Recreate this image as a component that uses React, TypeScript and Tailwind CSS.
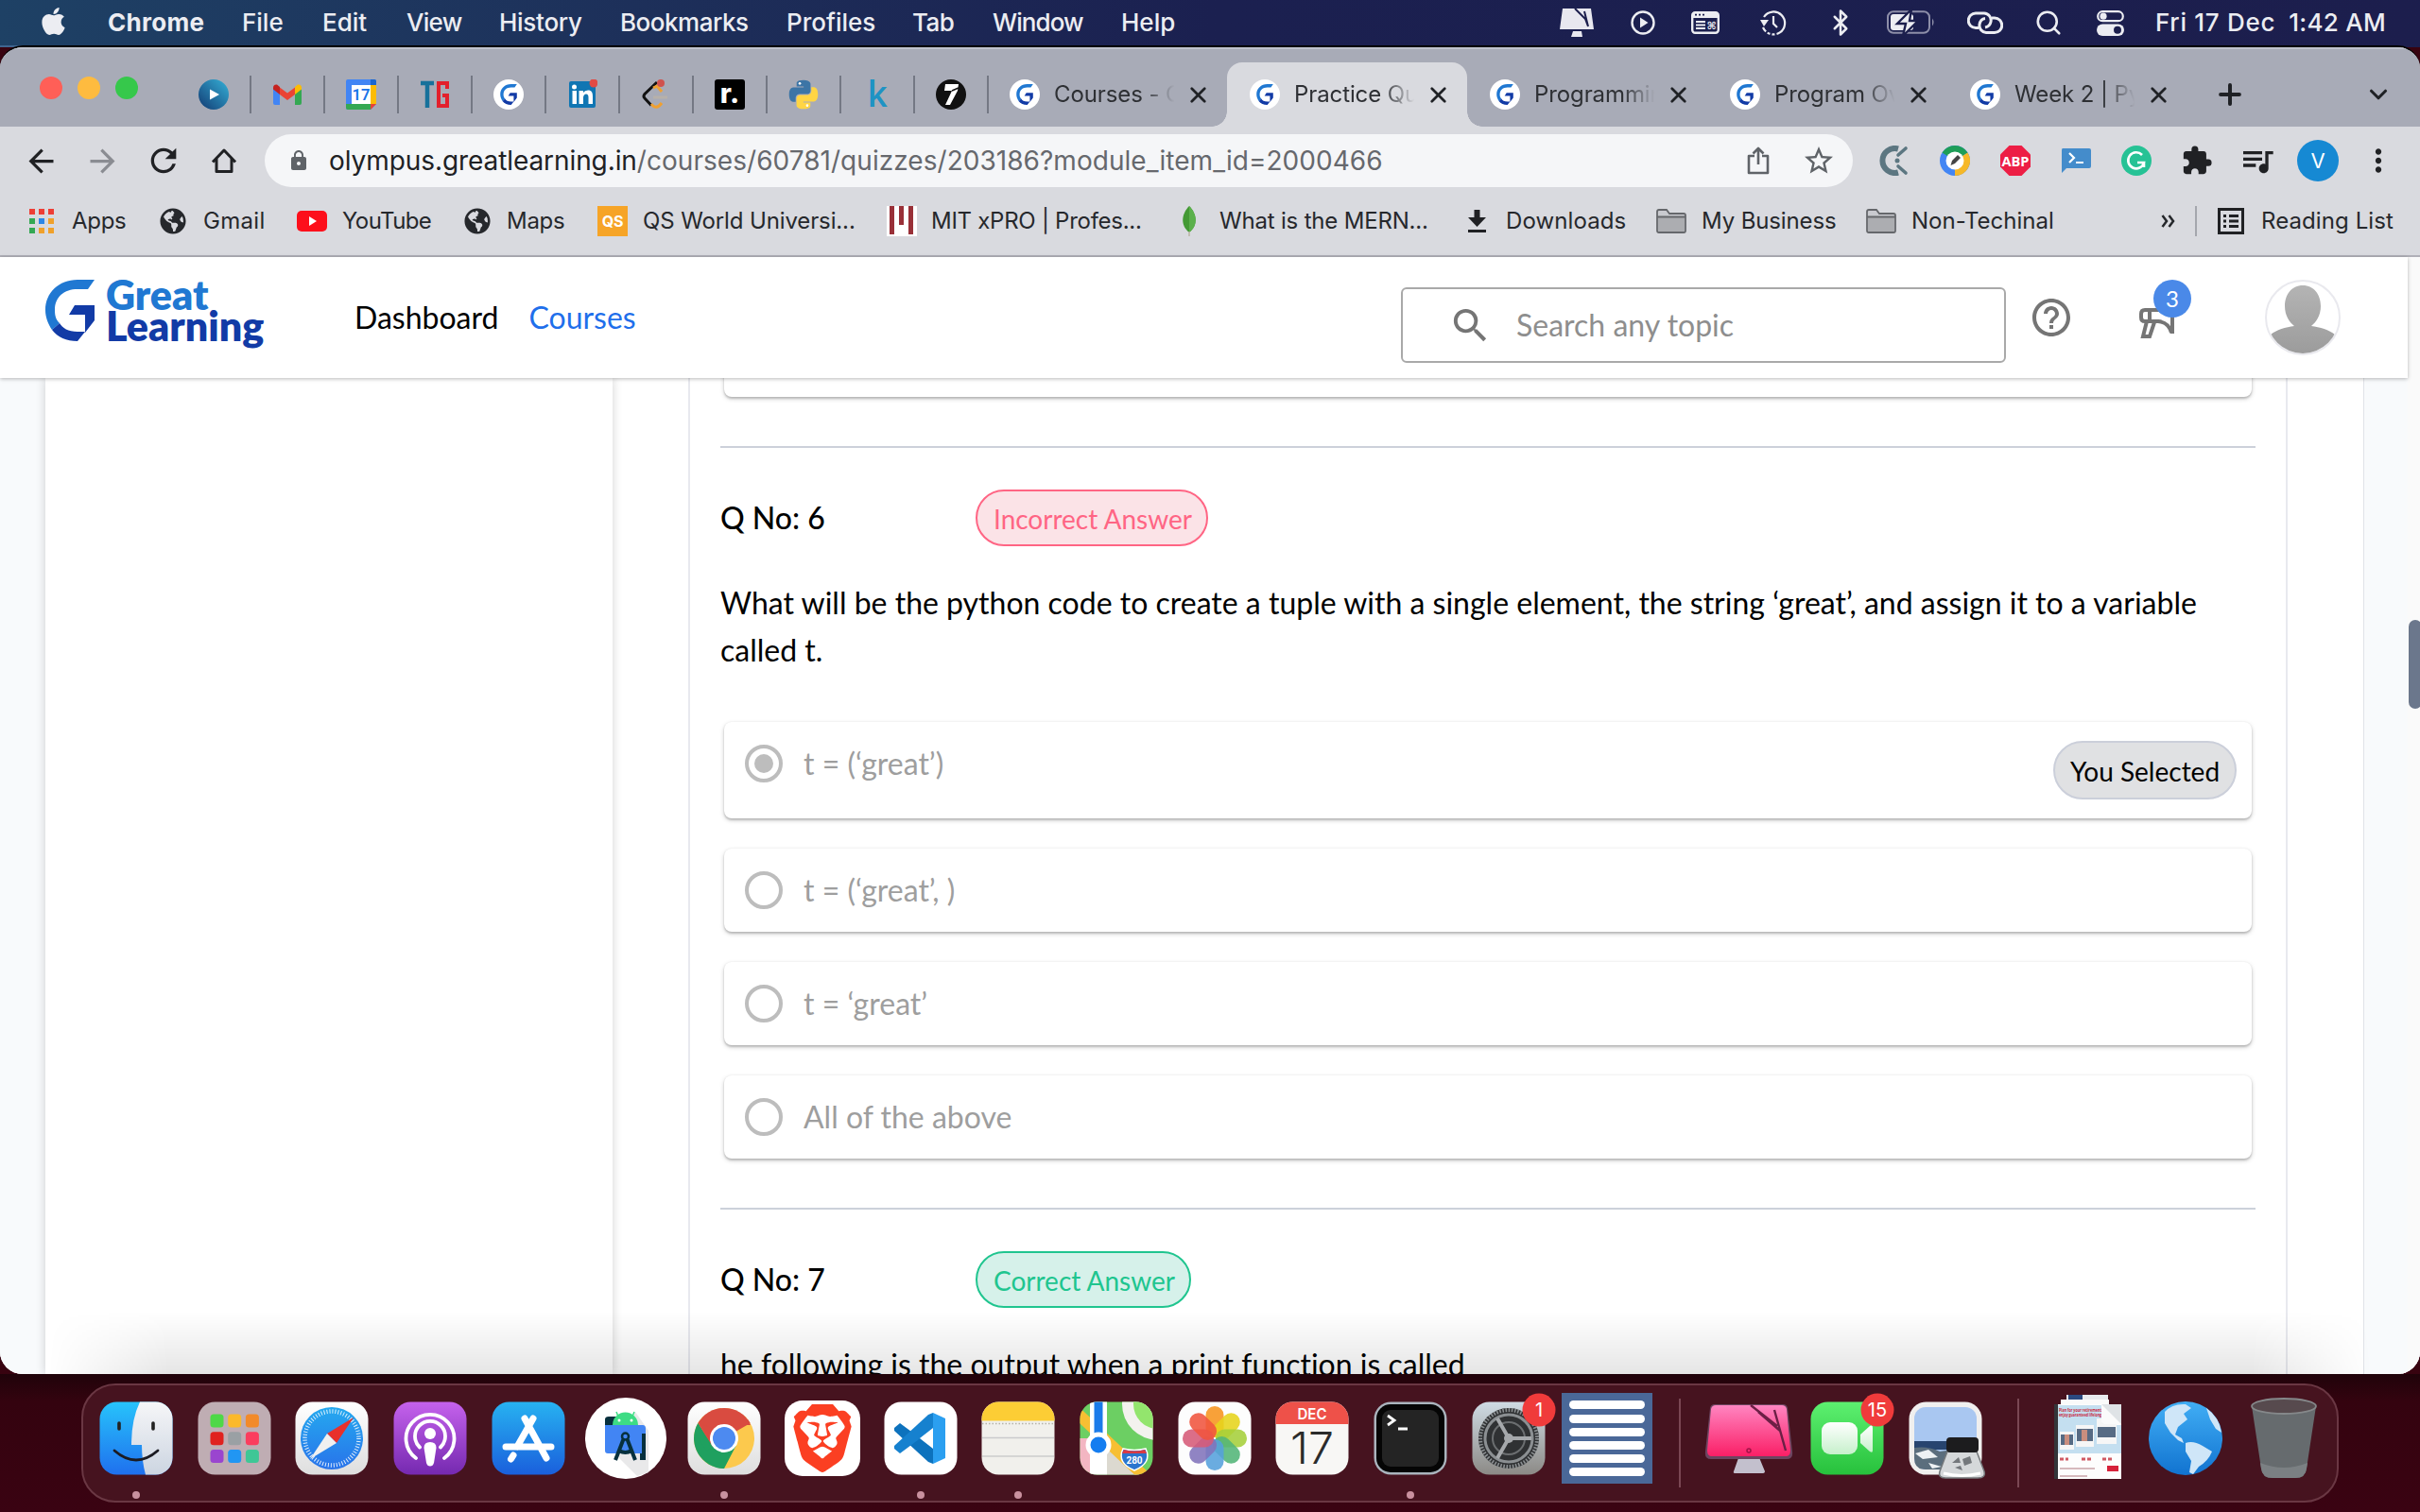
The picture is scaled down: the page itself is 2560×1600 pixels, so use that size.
import React from "react";
import { FaApple, FaGlobeAmericas } from "react-icons/fa";
import {
  MdSearch, MdHelpOutline, MdLock, MdExtension, MdQueueMusic, MdStarBorder,
  MdMoreVert, MdRefresh, MdArrowBack, MdArrowForward,
} from "react-icons/md";
import { SiBrave } from "react-icons/si";
import { Bluetooth, Search, X, Plus, ChevronDown } from "lucide-react";

type Kids = { children?: React.ReactNode };

/* ---------- menu bar ---------- */

const menuItems = [
  { t: "Chrome", c: "w-[142px] font-bold tracking-[0.3px]" },
  { t: "File", c: "w-[85px]" },
  { t: "Edit", c: "w-[89px]" },
  { t: "View", c: "w-[98px] tracking-[-0.7px]" },
  { t: "History", c: "w-[128px] tracking-[-0.28px]" },
  { t: "Bookmarks", c: "w-[176px] tracking-[-0.48px]" },
  { t: "Profiles", c: "w-[133px]" },
  { t: "Tab", c: "w-[85px] tracking-[-0.6px]" },
  { t: "Window", c: "w-[136px] tracking-[-0.9px]" },
  { t: "Help", c: "w-[60px]" },
];

function MenuBar() {
  return (
    <div className="flex h-[48px] shrink-0 items-center bg-gradient-to-r from-[#1e4165] via-[#1b2050] via-50% to-[#1c1e4d] text-[26px] font-medium leading-none text-[#ecedf2]">
      <FaApple className="ml-[40px] -mt-[4px] mr-[41px] size-[33px]" />
      {menuItems.map((m) => (
        <span key={m.t} className={"shrink-0 " + m.c}>{m.t}</span>
      ))}
      <div className="ml-[403px] flex h-full items-center">
        <svg className="h-[32px] w-[38px]" viewBox="0 0 38 32">
          <path d="M4 1H34L37 23H1Z M15 25H24L25 31H13Z" fill="#e8e8ef" />
          <path d="M17 1 28 12 31 20M27 4 31 20" stroke="#1c1f4d" strokeWidth="2" fill="none" />
        </svg>
        <svg className="ml-[38px] size-[26px]" viewBox="0 0 26 26">
          <circle cx="13" cy="13" r="11.5" fill="none" stroke="#ecedf2" strokeWidth="2.4" />
          <path d="M10 7.5 18.5 13 10 18.5Z" fill="#ecedf2" />
        </svg>
        <svg className="ml-[38px] h-[24px] w-[30px]" viewBox="0 0 30 24">
          <rect x="1.2" y="1.2" width="27.6" height="21.6" rx="3" fill="none" stroke="#ecedf2" strokeWidth="2.4" />
          <path d="M1 2H29V7H1Z" fill="#ecedf2" />
          <path d="M4 3.6H6M8 3.6H10M12 3.6H14" stroke="#1c1f4d" strokeWidth="1.8" />
          <path d="M5 11H15M5 14.5H15M5 18H15" stroke="#ecedf2" strokeWidth="1.8" />
          <text x="16.5" y="19" fontSize="11" fontWeight="700" fill="#ecedf2" fontFamily="DejaVu Sans">⌘</text>
        </svg>
        <svg className="ml-[42px] size-[30px]" viewBox="0 0 30 30">
          <path d="M5 9A12 12 0 1 1 4 20" fill="none" stroke="#ecedf2" strokeWidth="2.2" strokeDasharray="46 2 3 2 3 2" />
          <path d="M1 12 5 19 10 12Z" fill="#ecedf2" />
          <path d="M15 8V16L19 20" fill="none" stroke="#ecedf2" strokeWidth="2.2" />
        </svg>
        <Bluetooth className="ml-[41px] h-[32px] w-[30px]" strokeWidth={2} />
        <svg className="ml-[34px] h-[26px] w-[52px] overflow-visible" viewBox="0 0 52 26">
          <rect x="1" y="1.2" width="44" height="22.6" rx="6" fill="none" stroke="#8d8ea8" strokeWidth="2" />
          <path d="M48 8.500Q51 12.500 48 16.500Z" fill="#8d8ea8" />
          <rect x="4" y="4" width="24" height="17" rx="3" fill="#ecedf2" />
          <path d="M26 -1 11 14H20L17 27 33 11H24Z" fill="#ecedf2" stroke="#1c1f4d" strokeWidth="2.4" />
        </svg>
        <svg className="ml-[33px] h-[26px] w-[38px]" viewBox="0 0 38 26" fill="none" stroke="#ecedf2" strokeWidth="3">
          <path d="M12 18.500H9A7.500 7.500 0 0 1 9 3H18A7.500 7.500 0 0 1 25 12Q24 17 19 18" />
          <path d="M26 8H29A7.500 7.500 0 0 1 29 23.500H20A7.500 7.500 0 0 1 13 15Q14 9 19 8.500" />
        </svg>
        <Search className="ml-[33px] size-[30px]" strokeWidth={2.1} />
        <svg className="ml-[36px] h-[27px] w-[29px]" viewBox="0 0 29 27">
          <rect x="1.200" y="1.200" width="26.600" height="10" rx="5" fill="none" stroke="#ecedf2" strokeWidth="2.200" />
          <circle cx="7" cy="6.200" r="3.600" fill="#ecedf2" />
          <rect x="0" y="14.500" width="29" height="12.500" rx="6.200" fill="#ecedf2" />
          <circle cx="22" cy="20.700" r="4" fill="#1c1f4d" />
        </svg>
      </div>
      <span className="ml-[33px] shrink-0 whitespace-nowrap tracking-[0.7px]">Fri 17 Dec</span>
      <span className="ml-[14px] shrink-0 whitespace-nowrap tracking-[0.3px]">1:42 AM</span>
    </div>
  );
}

/* ---------- tab strip ---------- */

function GMark({ className }: { className: string }) {
  return (
    <svg className={className} viewBox="0 0 52 65">
      <path d="M52 0H34C14 0 0 14 0 32C0 40 3 47 7 53L15 46C11 42 10 38 10 32C10 18 20 10 34 10H45Z" fill="#2078d2" />
      <path d="M7 53C13 61 22 65 34 65L42 55H34C24 55 18 51 15 46Z M31 27H52V43L42 56V37H25Z" fill="#123ba6" />
    </svg>
  );
}

function GFav() {
  return (
    <span className="flex size-[32px] shrink-0 items-center justify-center rounded-full bg-white">
      <GMark className="h-[22px] w-[18px]" />
    </span>
  );
}

const pinned: React.ReactNode[] = [
  <svg className="size-[32px]" viewBox="0 0 32 32">
    <defs><linearGradient id="pl" x1="1" y1="0" x2="0" y2="1"><stop stopColor="#35b1d8" /><stop offset="1" stopColor="#123a72" /></linearGradient></defs>
    <circle cx="16" cy="16" r="16" fill="url(#pl)" /><path d="M12 10.500 22 16 12 21.500Z" fill="#fff" />
  </svg>,
  <svg className="h-[22px] w-[30px]" viewBox="0 0 30 22">
    <path d="M0 4V20Q0 22 2 22H7V10Z" fill="#4285f4" /><path d="M30 4V20Q30 22 28 22H23V10Z" fill="#34a853" />
    <path d="M7 3.500 15 9.500 23 3.500V11L15 17 7 11Z" fill="#ea4335" />
    <path d="M0 4Q0 0 4 .5L7 3V11L0 5.500Z" fill="#c5221f" /><path d="M30 4Q30 0 26 .5L23 3V11L30 5.500Z" fill="#fbbc04" />
  </svg>,
  <svg className="size-[32px]" viewBox="0 0 32 32">
    <path d="M2 0H30Q32 0 32 2V26L26 32H2Q0 32 0 30V2Q0 0 2 0Z" fill="#4285f4" />
    <path d="M26 6H32V26H26Z" fill="#fbbc04" /><path d="M0 26H26V32H2Q0 32 0 30Z" fill="#34a853" />
    <path d="M26 26H32L26 32Z" fill="#ea4335" /><path d="M26 0H30Q32 0 32 2V6H26Z" fill="#1967d2" />
    <path d="M6 6H26V26H6Z" fill="#fff" />
    <text x="16" y="22" fontSize="16.500" fontWeight="600" textAnchor="middle" fill="#1a73e8" fontFamily="Roboto">17</text>
  </svg>,
  <svg className="size-[32px]" viewBox="0 0 32 32" fill="none">
    <path d="M1 4H15M8 4V30" stroke="#17719b" strokeWidth="4.500" />
    <path d="M29 10V4H20V28H29V17H24" stroke="#e3202c" strokeWidth="4" />
  </svg>,
  <GFav />,
  <svg className="size-[32px]" viewBox="0 0 32 32">
    <rect x="2" y="2" width="28" height="28" rx="2" fill="#1076b3" />
    <circle cx="7.500" cy="8" r="2.500" fill="#fff" />
    <path d="M5.500 12H10V26H5.500Z M12.500 12H17V14Q18.500 11.500 22 11.500C26 11.500 27 14 27 18V26H22.500V19Q22.500 15.500 20 15.500T17 19V26H12.500Z" fill="#fff" />
    <circle cx="28" cy="4" r="4.500" fill="#e24b44" />
  </svg>,
  <svg className="size-[32px]" viewBox="0 0 32 32" fill="none" strokeWidth="3">
    <path d="M17 3 4 15.500Q2 18 4 20L11 27.500" stroke="#111" />
    <path d="M13 9 17 7 22 13M11 26Q16 33 22 25" stroke="#f0a030" /><path d="M13 19H28" stroke="#b7b1aa" />
    <circle cx="21" cy="4" r="4" fill="#d0524e" />
  </svg>,
  <span className="flex size-[32px] items-center justify-center rounded-[3px] bg-black pb-[3px] text-[29px] font-extrabold leading-none text-white">r.</span>,
  <svg className="size-[32px]" viewBox="1 1 22 22">
    <path d="M12 1.500c-5.400 0-5 2.300-5 2.300v2.400h5.100v.7H4.900S1.500 6.500 1.500 12s3 5.300 3 5.300h1.800v-2.600s-.1-3 2.900-3h5.100s2.800 0 2.800-2.700V4.500S17.500 1.500 12 1.500z" fill="#3c75a6" />
    <path transform="rotate(180 12 12)" d="M12 1.500c-5.400 0-5 2.300-5 2.300v2.400h5.100v.7H4.900S1.500 6.500 1.500 12s3 5.300 3 5.300h1.800v-2.600s-.1-3 2.900-3h5.100s2.800 0 2.800-2.700V4.500S17.500 1.500 12 1.500z" fill="#ffd544" />
    <circle cx="9.300" cy="4" r=".9" fill="#fff" /><circle cx="14.700" cy="20" r=".9" fill="#fff" />
  </svg>,
  <span className="pb-[3px] text-[37px] font-semibold leading-[32px] text-[#1e93c4] [font-family:'Open_Sans']">k</span>,
  <svg className="size-[32px]" viewBox="0 0 32 32">
    <circle cx="16" cy="16" r="16" fill="#111" /><path d="M10 5H24L23 12 15 27H10L17 12H9Z" fill="#fff" /><path d="M17 12 24 9" stroke="#111" strokeWidth="1.500" />
  </svg>,
];

const Sep = () => <span className="h-[40px] w-[2px] shrink-0 bg-[#747884]" />;

function Tab({ title, active, sep }: { title: string; active?: boolean; sep?: boolean }) {
  return (
    <div className={"relative flex h-[68px] w-[254px] shrink-0 items-center " + (active ? "rounded-t-[16px] bg-[#d9dadf]" : "")}>
      {active && (
        <>
          <span className="absolute bottom-0 -left-[16px] size-[16px] bg-[radial-gradient(circle_at_0_0,transparent_15.5px,#d9dadf_16px)]" />
          <span className="absolute bottom-0 -right-[16px] size-[16px] bg-[radial-gradient(circle_at_100%_0,transparent_15.5px,#d9dadf_16px)]" />
        </>
      )}
      <span className="ml-[24px]"><GFav /></span>
      <span className="ml-[15px] w-[130px] overflow-hidden whitespace-nowrap text-[24px] leading-[34px] tracking-[-0.1px] text-[#2e3034] [mask-image:linear-gradient(to_right,#000_72%,transparent_98%)]">{title}</span>
      <X className="ml-[9px] size-[27px] text-[#1f2125]" strokeWidth={2.4} />
      {sep && <span className="ml-auto"><Sep /></span>}
    </div>
  );
}

function TabStrip() {
  return (
    <div className="flex h-[84px] shrink-0 items-end border-t-2 border-[#bfc3ce] bg-[#a8abb7]">
      <div className="mb-[29px] ml-[42px] flex gap-[16px]">
        <span className="size-[24px] rounded-full bg-[#ff5f57]" />
        <span className="size-[24px] rounded-full bg-[#febb3f]" />
        <span className="size-[24px] rounded-full bg-[#36c84b]" />
      </div>
      <div className="-mr-[2px] ml-[42px] flex h-[68px] items-center">
        {pinned.map((p, i) => (
          <div key={i} className="flex w-[78px] items-center">
            <span className="flex h-[32px] w-[76px] items-center justify-center">{p}</span>
            <Sep />
          </div>
        ))}
      </div>
      <Tab title="Courses - Great" />
      <Tab title="Practice Quiz" active />
      <Tab title="Programming" sep />
      <Tab title="Program Overview" sep />
      <Tab title="Week 2 | Python" sep />
      <div className="flex h-[68px] flex-1 items-center text-[#1f2125]">
        <Plus className="ml-[28px] size-[34px]" strokeWidth={2.8} />
        <ChevronDown className="ml-auto mr-[29px] size-[30px]" strokeWidth={2.5} />
      </div>
    </div>
  );
}

/* ---------- toolbar ---------- */

const Ext = ({ children }: Kids) => <span className="flex w-[64px] shrink-0 items-center justify-center">{children}</span>;

function Toolbar() {
  return (
    <div className="flex h-[72px] shrink-0 items-center text-[#202124]">
      <MdArrowBack className="ml-[24px] size-[39px]" />
      <MdArrowForward className="ml-[26px] size-[39px] text-[#8a8c92]" />
      <MdRefresh className="ml-[25px] size-[40px]" />
      <svg className="ml-[30px] size-[28px]" viewBox="0 0 28 28" fill="none" stroke="#202124" strokeWidth="3">
        <path d="M2 15.500 14 3 26 15.500M6 12V25.500H22V12" strokeLinejoin="round" />
      </svg>
      <div className="ml-[29px] flex h-[56px] w-[1680px] shrink-0 items-center rounded-full bg-[#f5f6f8]">
        <MdLock className="ml-[24px] size-[24px] text-[#5f6368]" />
        <span className="ml-[20px] whitespace-nowrap text-[28px] leading-none tracking-[-0.08px]">olympus.greatlearning.in</span>
        <span className="whitespace-nowrap text-[28px] leading-none tracking-[0.04px] text-[#66686d]">/courses/60781/quizzes/203186?module_item_id=2000466</span>
        <svg className="ml-auto h-[30px] w-[24px]" viewBox="0 0 24 30" fill="none" stroke="#5f6368" strokeWidth="2.600">
          <path d="M8 10H2V28H22V10H16M12 19V3M6.500 7.500 12 2 17.500 7.500" strokeLinejoin="round" />
        </svg>
        <MdStarBorder className="ml-[34px] mr-[18px] size-[36px] text-[#5f6368]" />
      </div>
      <div className="ml-[12px] flex">
        <Ext>
          <svg className="size-[32px]" viewBox="0 0 32 32" fill="none" stroke="#5c7681">
            <path d="M20 3.500A13 13 0 1 0 20 28.500" strokeWidth="6" /><path d="M20 10 28 3M20 22 28 29" strokeWidth="3.600" strokeLinecap="round" /><circle cx="19" cy="16" r="2.500" fill="#5c7681" stroke="none" />
          </svg>
        </Ext>
        <Ext>
          <svg className="size-[32px]" viewBox="0 0 32 32">
            <circle cx="16" cy="16" r="16" fill="#4285f4" /><path d="M16 16 2.500 7.500A16 16 0 0 1 29.500 7.500Z" fill="#1e9e58" /><path d="M16 16 29.500 7.500A16 16 0 0 1 16 32Z" fill="#f6b828" />
            <circle cx="16" cy="16" r="9.500" fill="#fff" /><path d="M11.500 21 13 16 19 10 22 13 16 19Z" fill="#444" />
          </svg>
        </Ext>
        <Ext>
          <svg className="size-[32px]" viewBox="0 0 32 32">
            <path d="M9.500 0H22.500L32 9.500V22.500L22.500 32H9.500L0 22.500V9.500Z" fill="#ed1e45" />
            <text x="16" y="21.500" fontSize="15" fontWeight="700" textAnchor="middle" fill="#fff" fontFamily="Open Sans" textLength="29" lengthAdjust="spacingAndGlyphs">ABP</text>
          </svg>
        </Ext>
        <Ext>
          <svg className="size-[32px]" viewBox="0 0 32 32">
            <path d="M2 3H30Q32 3 32 5V22Q32 24 30 24H6L1 29V5Q1 3 2 3Z" fill="#448ccb" />
            <path d="M9 8 14 13 9 18M16 18H24" stroke="#fff" strokeWidth="2.200" fill="none" />
          </svg>
        </Ext>
        <Ext>
          <svg className="size-[32px]" viewBox="0 0 32 32">
            <circle cx="16" cy="16" r="16" fill="#26c295" />
            <path d="M22 10A8.500 8.500 0 1 0 24 18H17M24 18V23" stroke="#fff" strokeWidth="2.600" fill="none" />
          </svg>
        </Ext>
        <Ext><MdExtension className="size-[34px]" /></Ext>
        <Ext><MdQueueMusic className="size-[40px]" /></Ext>
        <Ext><span className="flex size-[44px] items-center justify-center rounded-full bg-[#1689d3] text-[22px] text-white">V</span></Ext>
        <Ext><MdMoreVert className="size-[38px]" /></Ext>
      </div>
    </div>
  );
}

/* ---------- bookmarks ---------- */

const Folder = () => (
  <svg className="h-[26px] w-[32px] shrink-0" viewBox="0 0 32 26">
    <path d="M1 3Q1 1 3 1H11L14 5H29Q31 5 31 7V23Q31 25 29 25H3Q1 25 1 23Z" fill="#c9cacf" stroke="#65676b" strokeWidth="1.800" />
    <path d="M2 8H30V24H2Z" fill="#acadb1" /><path d="M1 8.500H31" stroke="#65676b" strokeWidth="1.800" />
  </svg>
);

function Mark({ icon, text, c }: { icon: React.ReactNode; text: string; c: string }) {
  return (
    <div className={"flex shrink-0 items-center whitespace-nowrap " + c}>
      {icon}
      <span>{text}</span>
    </div>
  );
}

const appColors = ["bg-[#ee3e35]", "bg-[#ee3e35]", "bg-[#ee3e35]", "bg-[#34a853]", "bg-[#2b87e8]", "bg-[#f0a12b]", "bg-[#34a853]", "bg-[#f0a12b]", "bg-[#f0a12b]"];

function Bookmarks() {
  return (
    <div className="flex h-[64px] shrink-0 items-center pb-[8px] text-[24px] leading-none text-[#26282c]">
      <Mark c="ml-[31px] w-[138px] gap-[19px] tracking-[-0.3px]" text="Apps" icon={<span className="grid grid-cols-3 gap-[4px]">{appColors.map((c, i) => <i key={i} className={"size-[6px] " + c} />)}</span>} />
      <Mark c="w-[145px] gap-[18px] tracking-[0.3px]" text="Gmail" icon={<FaGlobeAmericas className="size-[28px]" />} />
      <Mark c="w-[177px] gap-[16px] tracking-[-0.6px]" text="YouTube" icon={<svg className="h-[22px] w-[32px]" viewBox="0 0 32 22"><rect width="32" height="22" rx="5" fill="#fd0f1b" /><path d="M13 6 21 11 13 16Z" fill="#fff" /></svg>} />
      <Mark c="w-[141px] gap-[17px] tracking-[-0.28px]" text="Maps" icon={<FaGlobeAmericas className="size-[28px]" />} />
      <Mark c="w-[306px] gap-[16px] tracking-[-0.12px]" text="QS World Universi..." icon={<span className="flex size-[32px] items-center justify-center bg-[#f6a427] text-[16px] font-bold text-white">QS</span>} />
      <Mark c="w-[309px] gap-[15px] tracking-[-0.27px]" text="MIT xPRO | Profes..." icon={<svg className="size-[32px]" viewBox="0 0 32 32"><path d="M0 0H32V32H0Z" fill="#fff" /><path d="M3 0H8V30H3ZM13 0H18V20H13ZM23 0H28V30H23Z" fill="#993038" /></svg>} />
      <Mark c="w-[302px] gap-[21px] tracking-[-0.19px]" text="What is the MERN..." icon={<svg className="h-[32px] w-[22px]" viewBox="0 0 22 32"><path d="M11 0C19 8 21 20 11 28C1 20 3 8 11 0Z" fill="#439934" /><path d="M11 0C19 8 21 20 11 28Z" fill="#5bb04b" /><path d="M11 27V32" stroke="#b8b4a4" strokeWidth="1.500" /></svg>} />
      <Mark c="w-[203px] gap-[21px] tracking-[0.1px] pl-[4px]" text="Downloads" icon={<svg className="h-[24px] w-[19px]" viewBox="0 0 19 24"><path d="M6.500 0H12.500V8H19L9.500 18 0 8H6.500ZM0 21H19V24H0Z" fill="#202124" /></svg>} />
      <Mark c="w-[222px] gap-[16px] tracking-[-0.13px]" text="My Business" icon={<Folder />} />
      <Mark c="w-[308px] gap-[16px] tracking-[0px]" text="Non-Techinal" icon={<Folder />} />
      <svg className="ml-[4px] h-[14px] w-[15px]" viewBox="0 0 15 14" fill="none" stroke="#26282c" strokeWidth="2.500"><path d="M1.500 1 6 7 1.500 13M8.500 1 13 7 8.500 13" /></svg>
      <span className="ml-[21px] h-[32px] w-[2px] bg-[#a4a6ad]" />
      <Mark c="ml-[22px] gap-[18px] tracking-[0.09px]" text="Reading List" icon={<svg className="size-[28px]" viewBox="0 0 28 28"><rect x="1.500" y="1.500" width="25" height="25" fill="none" stroke="#202124" strokeWidth="3" /><path d="M6 8.500H9M12 8.500H22M6 14H9M12 14H22M6 19.500H9M12 19.500H22" stroke="#202124" strokeWidth="2.800" /></svg>} />
    </div>
  );
}

/* ---------- site ---------- */

function SiteHeader() {
  return (
    <header className="relative z-10 flex h-[128px] w-[2547px] shrink-0 items-center bg-white shadow-[0_1px_4px_rgba(0,0,0,0.28)]">
      <div className="ml-[48px] flex w-[327px] gap-[12px] self-start pt-[24px]">
        <GMark className="h-[65px] w-[52px]" />
        <div className="-mt-[1px] flex flex-col text-[43px] font-extrabold leading-[33px]">
          <span className="text-[#2078d2]">Great</span>
          <span className="text-[#123ba6]">Learning</span>
        </div>
      </div>
      <nav className="flex gap-[32px] text-[32px] leading-none">
        <a className="text-black">Dashboard</a>
        <a className="text-[#1f6feb]">Courses</a>
      </nav>
      <div className="ml-auto mr-[28px] mt-[16px] flex h-[80px] w-[640px] items-center rounded-[6px] border-2 border-[#a9a9a9] text-[32px] leading-none text-[#8e8e8e]">
        <MdSearch className="ml-[48px] mr-[25px] size-[47px] text-[#757575]" />
        Search any topic
      </div>
      <MdHelpOutline className="size-[48px] -ml-[4px] text-[#757575]" />
      <div className="relative ml-[69px] mr-[77px] h-[56px] w-[56px]">
        <svg className="absolute top-[18px] h-[32px] w-[38px]" viewBox="0 0 38 32" fill="none" stroke="#757575" strokeWidth="4">
          <path d="M35 0V27M2 6Q2 2 6 2H32M2 6V10Q2 14 6 14H20Q31 15 34 26M11 2V14M8 14 4 30H11L16 15" />
        </svg>
        <span className="absolute -top-[12px] left-[15px] flex size-[40px] items-center justify-center rounded-full bg-[#4a89e8] text-[24px] text-white">3</span>
      </div>
      <svg className="mr-[71px] size-[80px]" viewBox="0 0 80 80">
        <defs>
          <linearGradient id="av" x1="0" y1="0" x2="0" y2="1"><stop stopColor="#b4b4b4" /><stop offset="1" stopColor="#9b9b9b" /></linearGradient>
          <clipPath id="avc"><circle cx="40" cy="40" r="38" /></clipPath>
        </defs>
        <circle cx="40" cy="40" r="39" fill="#fff" stroke="#e9e9ee" strokeWidth="2" />
        <path clipPath="url(#avc)" d="M40 6C52 6 59 16 59 28C59 38 54 45 49 49C58 50 68 53 74 58V80H6V58C12 53 22 50 31 49C26 45 21 38 21 28C21 16 28 6 40 6Z" fill="url(#av)" />
      </svg>
    </header>
  );
}

const cardBase = "mx-[4px] flex rounded-[8px] bg-white shadow-[0_2px_5px_rgba(0,0,0,0.2),0_2px_2px_rgba(0,0,0,0.14),0_0_2px_rgba(0,0,0,0.06)] pl-[22px] pr-[16px]";

function Option({ label, selected }: { label: string; selected?: boolean }) {
  return (
    <div className={cardBase + (selected ? " h-[102px]" : " h-[88px]")}>
      <span className="mt-[24px] flex size-[40px] items-center justify-center rounded-full border-[4px] border-[#bdbdbd]">
        {selected && <span className="size-[20px] rounded-full bg-[#bdbdbd]" />}
      </span>
      <span className="ml-[22px] mt-[24px] leading-[40px] text-[#9e9e9e]">{label}</span>
      {selected && (
        <span className="ml-auto mt-[20px] flex h-[62px] w-[194px] items-center justify-center rounded-full border-2 border-[#cbcfda] bg-[#e0e1e3] pt-px text-[28px] text-black">You Selected</span>
      )}
    </div>
  );
}

function QuestionHead({ n, label, c }: { n: number; label: string; c: string }) {
  return (
    <>
      <hr className="h-[2px] border-0 bg-[#ccd1da]" />
      <div className="mt-[44px] flex h-[60px] items-center">
        <span className="w-[270px] font-medium">Q No: {n}</span>
        <span className={"flex h-[60px] items-center rounded-full border-2 pl-[17px] pr-[15px] pt-[2px] text-[28px] leading-none " + c}>{label}</span>
      </div>
    </>
  );
}

function Page() {
  return (
    <div className="relative flex min-h-0 flex-1 overflow-hidden bg-[#f8fafc]">
      <aside className="relative z-[1] ml-[48px] w-[600px] shrink-0 bg-white shadow-[0_0_10px_rgba(0,0,0,0.18)]" />
      <main className="flex w-[1853px] shrink-0 border-r border-[#e0e3e8] bg-white pl-[80px]">
        <div className="w-[1692px] border-x-2 border-[#e8e9ef] px-[32px] text-[32px] leading-[40px] text-black">
          <div className={cardBase + " -mt-[20px] h-[40px]"} />
          <div className="h-[52px]" />
          <QuestionHead n={6} label="Incorrect Answer" c="border-[#ff6584] bg-[#fbe3e7] text-[#ff6584]" />
          <p className="mt-[35px] leading-[50px]">
            What will be the python code to create a tuple with a single element, the string ‘great’, and assign it to a variable<br />called t.
          </p>
          <div className="mb-[52px] mt-[51px] flex flex-col gap-[32px]">
            <Option label="t = (‘great’)" selected />
            <Option label="t = (‘great’, )" />
            <Option label="t = ‘great’" />
            <Option label="All of the above" />
          </div>
          <QuestionHead n={7} label="Correct Answer" c="border-[#20c58f] bg-[#d6f1ea] text-[#20c58f]" />
          <p className="mt-[35px] whitespace-nowrap leading-[50px] [font-variant-ligatures:none]">he following is the output when a print function is called</p>
        </div>
      </main>
      <div className="ml-auto w-[13px] shrink-0 bg-[#fafafa] pt-[256px]">
        <div className="ml-px h-[94px] w-[14px] rounded-full bg-[#6b778c]" />
      </div>
      <div className="pointer-events-none absolute inset-x-0 bottom-0 z-[2] h-[66px] bg-gradient-to-b from-transparent to-black/10 [mask-image:linear-gradient(to_right,transparent_2%,#000_7%,#000_93%,transparent_98%)]" />
    </div>
  );
}

/* ---------- dock ---------- */

const Box = ({ fill, children }: Kids & { fill: string }) => (
  <svg className="size-[96px] overflow-visible" viewBox="0 0 96 96">
    <rect x="9.500" y="9.500" width="77" height="77" rx="18" fill={fill} />
    {children}
  </svg>
);

const Badge = ({ n }: { n: string }) => (
  <g>
    <circle cx="80" cy="18" r="17.500" fill="#f03b3b" />
    <text x="80" y="25" fontSize="20" textAnchor="middle" fill="#fff" fontFamily="Inter">{n}</text>
  </g>
);

const padColors = ["#4ed847", "#fbb92b", "#f28a2a", "#e0211f", "#9aa0a4", "#fb3d5e", "#9a45cf", "#2196f3", "#3fc796"];
const petals = ["#f7941e", "#e6d41b", "#a5cf3a", "#52b577", "#55a0dc", "#8173bb", "#d65a78", "#f0543d"];

const VG = ({ id, a, b }: { id: string; a: string; b: string }) => (
  <linearGradient id={id} x1="0" y1="0" x2="0" y2="1"><stop stopColor={a} /><stop offset="1" stopColor={b} /></linearGradient>
);

const mainApps: { dot?: boolean; el: React.ReactNode }[] = [
  { dot: true, el: (
    <Box fill="url(#finB)">
      <path d="M52 9.500H68.500A18 18 0 0 1 86.500 27.500V68.500A18 18 0 0 1 68.500 86.500H58Q54 72 54 55H43Q43 28 52 9.500Z" fill="url(#finW)" />
      <path d="M30 32V38M66 32V38" stroke="#222" strokeWidth="3.600" strokeLinecap="round" />
      <path d="M25 61Q48 81 71 61" stroke="#1b1b22" strokeWidth="2.800" fill="none" strokeLinecap="round" />
    </Box>) },
  { el: (
    <Box fill="#bfadb3">
      {padColors.map((c, i) => <rect key={i} x={22.500 + (i % 3) * 18.700} y={22.500 + Math.floor(i / 3) * 18.700} width="14" height="14" rx="3.500" fill={c} />)}
    </Box>) },
  { el: (
    <Box fill="url(#wh)">
      <circle cx="48" cy="48" r="33" fill="url(#saf)" />
      <circle cx="48" cy="48" r="28.500" fill="none" stroke="#fff" strokeOpacity=".85" strokeWidth="4.500" strokeDasharray="1 1.990" />
      <path d="M71 26 53 53 43 43Z" fill="#e8302b" /><path d="M25 70 53 53 43 43Z" fill="#f0f0f0" />
    </Box>) },
  { el: (
    <Box fill="url(#pod)">
      <g fill="none" stroke="#fff" strokeWidth="3.800" strokeLinecap="round">
        <path d="M33 69A25.500 25.500 0 1 1 63 69" /><path d="M37 57.500A16 16 0 1 1 59 57.500" />
      </g>
      <circle cx="48" cy="43" r="6" fill="#fff" /><path d="M41.500 58Q41.500 52 48 52T54.500 58L52 74Q51 77.500 48 77.500T44 74Z" fill="#fff" />
    </Box>) },
  { el: (
    <Box fill="url(#aps)">
      <g stroke="#fff" strokeWidth="7" strokeLinecap="round">
        <path d="M53 27 36 57M44 27 67 69M24 57H72M32 66 29.500 70" />
      </g>
    </Box>) },
  { el: (
    <svg className="size-[96px]" viewBox="0 0 96 96">
      <circle cx="48" cy="48" r="43" fill="#fff" />
      <path d="M58 20 72 40V84L60 88 40 68Z" fill="#e9e9ea" />
      <path d="M26 28Q26 25 30 25H40V36H26Z M63 43H69V71H63Z" fill="#07303d" />
      <path d="M34 34A13.500 13.500 0 0 1 61 34Z" fill="#3ddc84" /><path d="M40 25 38 20M55 25 57 20" stroke="#3ddc84" strokeWidth="1.500" />
      <circle cx="41" cy="29" r="1.500" fill="#fff" /><circle cx="54" cy="29" r="1.500" fill="#fff" />
      <path d="M26 34H66Q69 34 69 38V43H65V64H29Q26 64 26 61Z" fill="#4285f4" />
      <circle cx="47.500" cy="46" r="3.500" fill="none" stroke="#07303d" strokeWidth="2.500" />
      <path d="M45.500 49 37 71M49.500 49 58 71M41 61Q47.500 65 54 61" stroke="#07303d" strokeWidth="4" fill="none" />
    </svg>) },
  { dot: true, el: (
    <Box fill="url(#wh)">
      <circle cx="48" cy="48" r="32" fill="#fcc94d" />
      <path d="M48 48 20.300 32A32 32 0 0 1 75.700 32Z" fill="#d94b40" /><path d="M48 34H76L73 28H40Z" fill="#d94b40" />
      <path d="M20.300 32A32 32 0 0 0 48 80L60.500 56 35.500 55Z" fill="#1fa05f" /><path d="M20.300 32 36 57 44 40Z" fill="#d94b40" /><path d="M20.300 32 34 57 30 62 18 44Z" fill="#1fa05f" />
      <circle cx="48" cy="48" r="15" fill="#fff" /><circle cx="48" cy="48" r="12" fill="#4d8af0" />
    </Box>) },
  { el: (
    <span className="flex size-[96px] items-center justify-center">
      <span className="flex size-[80px] items-center justify-center rounded-[19px] bg-white">
        <SiBrave className="size-[72px] text-[#fb3f22]" />
      </span>
    </span>) },
  { dot: true, el: (
    <Box fill="#fff">
      <path d="M61 21 74 27V69L61 75Z" fill="#2b9ff0" />
      <path d="M20 37 26 32 61 58V75L56 73 20 40Z" fill="#0d72bd" /><path d="M20 59 26 64 61 38V21L56 23 20 56Z" fill="#1681cf" />
      <path d="M61 37V59L47 48Z" fill="#fff" />
    </Box>) },
  { dot: true, el: (
    <Box fill="#f1f0ec">
      <path d="M9.500 29.500V27.500A18 18 0 0 1 27.500 9.500H68.500A18 18 0 0 1 86.500 27.500V29.500Z" fill="#fccd35" />
      <path d="M10 47.500H86M10 67H86" stroke="#cbcbcc" strokeWidth="1.500" /><path d="M10 32.500H86" stroke="#b5b2a8" strokeWidth="1.500" strokeDasharray="1.500 2" />
    </Box>) },
  { el: (
    <svg className="size-[96px]" viewBox="0 0 96 96">
      <clipPath id="mp"><rect x="9.500" y="9.500" width="77" height="77" rx="18" /></clipPath>
      <g clipPath="url(#mp)">
        <path d="M0 0H96V96H0Z" fill="#6ccf63" /><path d="M38 48 80 96H38Z" fill="#dcd9d0" /><path d="M0 48H22V96H0Z" fill="#f3b6c2" />
        <circle cx="92" cy="12" r="38" fill="#f3f2ee" /><circle cx="92" cy="12" r="26" fill="#93e56d" />
        <path d="M5 20 86 96" stroke="#f7bf33" strokeWidth="12" />
        <path d="M29 0V96" stroke="#fff" strokeWidth="18" /><path d="M29 0V55" stroke="#1a7bea" strokeWidth="9" />
      </g>
      <circle cx="29" cy="55" r="13.500" fill="#fff" /><circle cx="29" cy="55" r="8.500" fill="#147df0" />
      <path d="M55 59Q67 62 79 59Q86 74 67 82Q48 74 55 59Z" fill="#2b75ce" stroke="#fff" strokeWidth="1.500" /><path d="M54 64 56 60Q67 63 78 60L80 64Z" fill="#d93a44" />
      <text x="67" y="75" fontSize="10" fontWeight="700" textAnchor="middle" fill="#fff" fontFamily="Roboto">280</text>
    </svg>) },
  { el: (
    <Box fill="#fdfdfd">
      {petals.map((c, i) => <rect key={c} x="38.500" y="14" width="19" height="33" rx="9.500" fill={c} fillOpacity=".88" transform={`rotate(${i * 45} 48 48)`} />)}
    </Box>) },
  { el: (
    <Box fill="#f8f7f5">
      <path d="M9.500 33V27.500A18 18 0 0 1 27.500 9.500H68.500A18 18 0 0 1 86.500 27.500V33Z" fill="#ee5149" />
      <text x="48" y="28" fontSize="16" fontWeight="600" textAnchor="middle" fill="#fff" fontFamily="Inter" textLength="31" lengthAdjust="spacingAndGlyphs">DEC</text>
      <text x="48" y="75" fontSize="47" fontWeight="300" textAnchor="middle" fill="#2b2b2b" fontFamily="Inter" textLength="46" lengthAdjust="spacingAndGlyphs">17</text>
    </Box>) },
  { dot: true, el: (
    <Box fill="#aab4bd">
      <rect x="12" y="12" width="72" height="72" rx="15" fill="#050505" /><rect x="18" y="18" width="60" height="60" rx="9" fill="#242424" />
      <path d="M24 24 31 29 24 34M35 38H45" stroke="#fff" strokeWidth="2.800" fill="none" />
    </Box>) },
  { el: (
    <Box fill="url(#gry)">
      <circle cx="48" cy="48" r="32" fill="#2f3133" /><circle cx="48" cy="48" r="30" fill="none" stroke="#8b8f92" strokeWidth="4" strokeDasharray="1.600 1.600" />
      <circle cx="48" cy="48" r="25" fill="none" stroke="#8b8f92" strokeWidth="3" /><circle cx="48" cy="48" r="17" fill="none" stroke="#6b6e70" strokeWidth="2" />
      <circle cx="48" cy="48" r="5" fill="#a5a8ab" />
      <path d="M48 48H72M48 48 36 27M48 48 36 69" stroke="#a5a8ab" strokeWidth="4" />
      <Badge n="1" />
    </Box>) },
  { el: (
    <svg className="size-[96px]" viewBox="0 0 96 96">
      <path d="M0 0H96V96H0Z" fill="#4a6898" />
      {[8, 23, 37, 51, 65, 79].map((y) => <rect key={y} x="8" y={y} width="80" height="9" rx="4.500" fill="#fff" />)}
    </svg>) },
];

function Dock() {
  return (
    <div className="mx-auto mt-[10px] flex h-[126px] w-[2388px] shrink-0 items-start rounded-[36px] border-2 border-[#6a3743] bg-[#46131f] pl-[4px]">
      <svg className="absolute size-0">
        <defs>
          <VG id="finB" a="#27c3fb" b="#1f70ee" /><VG id="finW" a="#f6f6f8" b="#ccd5e1" /><VG id="wh" a="#ffffff" b="#dedede" />
          <VG id="saf" a="#25a9ef" b="#2873ea" /><VG id="pod" a="#c562ec" b="#7529b0" /><VG id="aps" a="#27b2f1" b="#1a5fdc" />
          <VG id="gry" a="#cfdbe4" b="#8c8a86" /><VG id="pnk" a="#ff85c1" b="#fa1f66" /><VG id="fct" a="#5df070" b="#27c13c" />
          <VG id="cam" a="#ffffff" b="#c6f0cb" /><VG id="glb" a="#41aef5" b="#1173d0" /><VG id="trs" a="#64605f" b="#747b80" />
        </defs>
      </svg>
      {mainApps.map((a, i) => (
        <div key={i} className="flex w-[103.73px] shrink-0 flex-col items-center pt-[8px]">
          {a.el}
          {a.dot && <span className="mt-[8px] size-[8px] rounded-full bg-[#c9919f]" />}
        </div>
      ))}
      <span className="ml-[24px] mt-[14px] h-[94px] w-[2px] bg-[#7a4753]" />
      <div className="ml-[24px] flex gap-[8px] pt-[8px]">
        <svg className="size-[96px]" viewBox="0 0 96 96">
          <path d="M38 66H58L65 83Q65 85 62 85H34Q31 85 32 83Z" fill="#c3c0cd" />
          <path d="M12 12H84Q88 12 89 16L94 62Q95 70 88 70H8Q1 70 2 62L7 16Q8 12 12 12Z" fill="#6c4560" />
          <path d="M13 13H83Q87 13 88 17L92 61Q92 67 87 67H9Q4 67 4 61L8 17Q9 13 13 13Z" fill="url(#pnk)" />
          <path d="M50 13 78 35M75 18 87 61M58 20 81 40" stroke="#6c1f45" strokeWidth="2.400" /><circle cx="48" cy="61" r="2" fill="none" stroke="#a01348" strokeWidth="1.500" />
        </svg>
        <Box fill="url(#fct)">
          <rect x="21" y="31" width="38" height="34" rx="9" fill="url(#cam)" /><path d="M62 44 72 35Q75 33 75 37V61Q75 64 72 62L62 53Z" fill="url(#cam)" />
          <Badge n="15" />
        </Box>
        <Box fill="#f0efee">
          <rect x="15" y="15" width="66" height="66" rx="12" fill="#a9c7f1" /><path d="M15 51H81V60H15Z" fill="#27446f" />
          <path d="M15 58Q30 56 42 62L56 60V81H27Q15 81 15 69Z" fill="#5b6e7d" /><path d="M16 64 30 60 40 68 24 70ZM30 74 44 78 34 80Z" fill="#eef2f4" />
          <path d="M50 62H81L89 83Q91 90 82 90H48Q40 90 42 83Z" fill="#d5d8da" stroke="#75797c" strokeWidth="1.500" />
          <path d="M55 74 62 68 64 74ZM66 70 74 67 76 74 68 77ZM58 79 64 77 66 82Z" fill="#74787c" /><rect x="49" y="47" width="34" height="16" rx="4" fill="#1c1c1e" />
          <path d="M46 85Q65 90 85 85" stroke="#fff" strokeWidth="3" fill="none" />
        </Box>
      </div>
      <span className="ml-[28px] mt-[14px] h-[94px] w-[2px] bg-[#7a4753]" />
      <div className="ml-[24px] flex gap-[8px] pt-[8px]">
        <svg className="size-[96px]" viewBox="0 0 96 96">
          <path d="M26 2H70V20H26Z" fill="#e8ebee" /><path d="M28 2H43V7H28Z" fill="#2b4a80" /><path d="M20 7H71V20H20Z" fill="#fafafa" />
          <path d="M13 12H84V91H13Z" fill="#fdfdfd" /><path d="M17 13H64V34H84V64H17Z" fill="#c4dff0" /><path d="M13 12H17V91H13Z" fill="#33363a" />
          <text x="18" y="20" fontSize="5" fontWeight="700" fill="#c8243b" fontFamily="Open Sans" textLength="45" lengthAdjust="spacingAndGlyphs">Plan for your retirement</text>
          <text x="18" y="25" fontSize="5" fontWeight="700" fill="#c8243b" fontFamily="Open Sans" textLength="45" lengthAdjust="spacingAndGlyphs">enjoy guaranteed lifelong</text>
          <path d="M19 41H34V60H19ZM36 34H55V57H36ZM58 27H79V54H58Z" fill="#f6f6f6" /><path d="M20 44H33V55H20ZM37 38H54V51H37ZM59 36H78V47H59Z" fill="#576b84" />
          <path d="M24 44H29V55H24ZM42 39H48V51H42Z" fill="#c98e7e" />
          <path d="M63 12H84V33H66Q63 33 63 30Z" fill="#dfe3e6" /><path d="M63 12 84 33H66Q63 33 63 30Z" fill="#fbfbfb" />
          <path d="M19 70H28M42 70H52M64 70H74" stroke="#d05a64" strokeWidth="3" strokeDasharray="4 2" /><path d="M19 80H56M19 88H48" stroke="#c9a3a8" strokeWidth="1.500" /><path d="M69 77H81V83H69Z" fill="#d6213a" />
        </svg>
        <svg className="size-[96px]" viewBox="0 0 96 96">
          <circle cx="48" cy="48" r="39" fill="url(#glb)" />
          <path d="M26 20Q34 11 48 12L54 16 46 22 50 28 40 36 37 44 44 48 46 53 40 50 32 42 26 32Z M48 53Q56 50 66 56L76 62Q72 72 62 78L56 86 52 84 54 72 48 62Z M70 16Q84 26 86 42L80 38 74 28Z" fill="#cfe6f8" />
        </svg>
        <svg className="size-[96px]" viewBox="0 0 96 96">
          <path d="M14 14 24 80Q25 90 36 90H60Q71 90 72 80L82 14Z" fill="#666b6e" />
          <path d="M24 80Q25 90 36 90H60Q71 90 72 80L73 74Q48 84 23 74Z" fill="#7b8083" />
          <ellipse cx="48" cy="14" rx="34" ry="8" fill="#574a4e" stroke="#85888a" strokeWidth="1.800" />
        </svg>
      </div>
    </div>
  );
}

export default function App() {
  return (
    <div className="flex h-[1600px] w-[2560px] flex-col overflow-hidden bg-[#380310] [font-family:Inter,sans-serif]">
      <div className="shrink-0 bg-gradient-to-r from-[#3f6590] to-[#1c1e4d] pb-[2px]">
        <MenuBar />
      </div>
      <div className="-mt-[2px] flex h-[1406px] shrink-0 flex-col bg-[linear-gradient(to_right,#3f6590,#1c1e4d)_top/100%_60px_no-repeat,linear-gradient(#2a020b,#2a020b)]">
        <div className="flex h-full flex-col overflow-hidden rounded-[24px] border-t-2 border-black bg-[#d9dadf]">
          <TabStrip />
          <Toolbar />
          <Bookmarks />
          <div className="h-[2px] shrink-0 bg-[#b0b0b8]" />
          <div className="flex min-h-0 flex-1 flex-col bg-[#fafafa] [font-family:Lato,sans-serif]">
            <SiteHeader />
            <Page />
          </div>
        </div>
      </div>
      <div className="flex flex-1 flex-col bg-gradient-to-b from-[#20030a] via-[#34030f] via-20% to-[#3a0312]">
        <Dock />
      </div>
    </div>
  );
}
